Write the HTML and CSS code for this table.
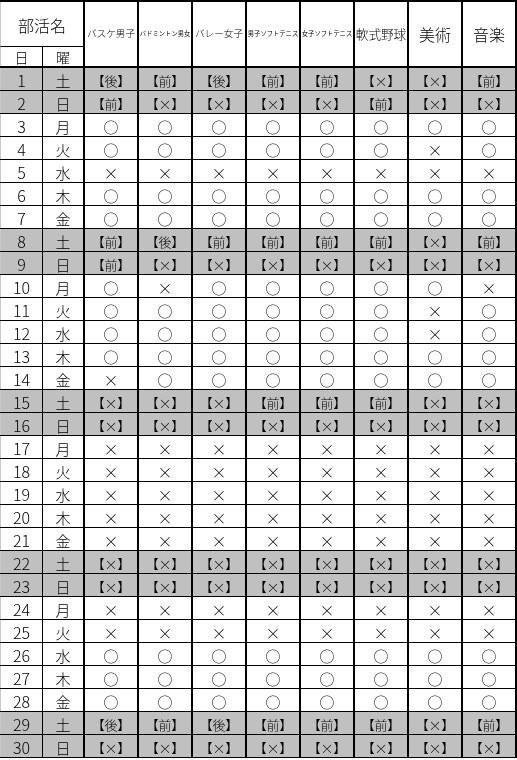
FILE: index.html
```html
<!DOCTYPE html>
<html lang="ja">
<head>
<meta charset="utf-8">
<title>部活動予定表</title>
<link rel="stylesheet" href="styles.css">
</head>
<body>
<div class="sheet">
  <div class="head">
    <div class="hc club">部活名</div>
    <div class="hc sport s10">バスケ男子</div>
    <div class="hc sport s6">バドミントン男女</div>
    <div class="hc sport s10">バレー女子</div>
    <div class="hc sport s6">男子ソフトテニス</div>
    <div class="hc sport s6">女子ソフトテニス</div>
    <div class="hc sport s12">軟式野球</div>
    <div class="hc sport s16">美術</div>
    <div class="hc sport s16">音楽</div>
    <div class="hc day">日</div>
    <div class="hc wd">曜</div>
  </div>

  <div class="row we"><div class="c d">1</div><div class="c w">土</div><div class="c b">【後】</div><div class="c b">【前】</div><div class="c b">【後】</div><div class="c b">【前】</div><div class="c b">【前】</div><div class="c b">【×】</div><div class="c b">【×】</div><div class="c b">【前】</div></div>
  <div class="row we"><div class="c d">2</div><div class="c w">日</div><div class="c b">【前】</div><div class="c b">【×】</div><div class="c b">【×】</div><div class="c b">【×】</div><div class="c b">【×】</div><div class="c b">【前】</div><div class="c b">【×】</div><div class="c b">【×】</div></div>
  <div class="row"><div class="c d">3</div><div class="c w">月</div><div class="c o">○</div><div class="c o">○</div><div class="c o">○</div><div class="c o">○</div><div class="c o">○</div><div class="c o">○</div><div class="c o">○</div><div class="c o">○</div></div>
  <div class="row"><div class="c d">4</div><div class="c w">火</div><div class="c o">○</div><div class="c o">○</div><div class="c o">○</div><div class="c o">○</div><div class="c o">○</div><div class="c o">○</div><div class="c x">×</div><div class="c o">○</div></div>
  <div class="row"><div class="c d">5</div><div class="c w">水</div><div class="c x">×</div><div class="c x">×</div><div class="c x">×</div><div class="c x">×</div><div class="c x">×</div><div class="c x">×</div><div class="c x">×</div><div class="c x">×</div></div>
  <div class="row"><div class="c d">6</div><div class="c w">木</div><div class="c o">○</div><div class="c o">○</div><div class="c o">○</div><div class="c o">○</div><div class="c o">○</div><div class="c o">○</div><div class="c o">○</div><div class="c o">○</div></div>
  <div class="row"><div class="c d">7</div><div class="c w">金</div><div class="c o">○</div><div class="c o">○</div><div class="c o">○</div><div class="c o">○</div><div class="c o">○</div><div class="c o">○</div><div class="c o">○</div><div class="c o">○</div></div>
  <div class="row we"><div class="c d">8</div><div class="c w">土</div><div class="c b">【前】</div><div class="c b">【後】</div><div class="c b">【前】</div><div class="c b">【前】</div><div class="c b">【前】</div><div class="c b">【前】</div><div class="c b">【×】</div><div class="c b">【前】</div></div>
  <div class="row we"><div class="c d">9</div><div class="c w">日</div><div class="c b">【前】</div><div class="c b">【×】</div><div class="c b">【×】</div><div class="c b">【×】</div><div class="c b">【×】</div><div class="c b">【×】</div><div class="c b">【×】</div><div class="c b">【×】</div></div>
  <div class="row"><div class="c d">10</div><div class="c w">月</div><div class="c o">○</div><div class="c x">×</div><div class="c o">○</div><div class="c o">○</div><div class="c o">○</div><div class="c o">○</div><div class="c o">○</div><div class="c x">×</div></div>
  <div class="row"><div class="c d">11</div><div class="c w">火</div><div class="c o">○</div><div class="c o">○</div><div class="c o">○</div><div class="c o">○</div><div class="c o">○</div><div class="c o">○</div><div class="c x">×</div><div class="c o">○</div></div>
  <div class="row"><div class="c d">12</div><div class="c w">水</div><div class="c o">○</div><div class="c o">○</div><div class="c o">○</div><div class="c o">○</div><div class="c o">○</div><div class="c o">○</div><div class="c x">×</div><div class="c o">○</div></div>
  <div class="row"><div class="c d">13</div><div class="c w">木</div><div class="c o">○</div><div class="c o">○</div><div class="c o">○</div><div class="c o">○</div><div class="c o">○</div><div class="c o">○</div><div class="c o">○</div><div class="c o">○</div></div>
  <div class="row"><div class="c d">14</div><div class="c w">金</div><div class="c x">×</div><div class="c o">○</div><div class="c o">○</div><div class="c o">○</div><div class="c o">○</div><div class="c o">○</div><div class="c o">○</div><div class="c o">○</div></div>
  <div class="row we"><div class="c d">15</div><div class="c w">土</div><div class="c b">【×】</div><div class="c b">【×】</div><div class="c b">【×】</div><div class="c b">【前】</div><div class="c b">【前】</div><div class="c b">【前】</div><div class="c b">【×】</div><div class="c b">【×】</div></div>
  <div class="row we"><div class="c d">16</div><div class="c w">日</div><div class="c b">【×】</div><div class="c b">【×】</div><div class="c b">【×】</div><div class="c b">【×】</div><div class="c b">【×】</div><div class="c b">【×】</div><div class="c b">【×】</div><div class="c b">【×】</div></div>
  <div class="row"><div class="c d">17</div><div class="c w">月</div><div class="c x">×</div><div class="c x">×</div><div class="c x">×</div><div class="c x">×</div><div class="c x">×</div><div class="c x">×</div><div class="c x">×</div><div class="c x">×</div></div>
  <div class="row"><div class="c d">18</div><div class="c w">火</div><div class="c x">×</div><div class="c x">×</div><div class="c x">×</div><div class="c x">×</div><div class="c x">×</div><div class="c x">×</div><div class="c x">×</div><div class="c x">×</div></div>
  <div class="row"><div class="c d">19</div><div class="c w">水</div><div class="c x">×</div><div class="c x">×</div><div class="c x">×</div><div class="c x">×</div><div class="c x">×</div><div class="c x">×</div><div class="c x">×</div><div class="c x">×</div></div>
  <div class="row"><div class="c d">20</div><div class="c w">木</div><div class="c x">×</div><div class="c x">×</div><div class="c x">×</div><div class="c x">×</div><div class="c x">×</div><div class="c x">×</div><div class="c x">×</div><div class="c x">×</div></div>
  <div class="row"><div class="c d">21</div><div class="c w">金</div><div class="c x">×</div><div class="c x">×</div><div class="c x">×</div><div class="c x">×</div><div class="c x">×</div><div class="c x">×</div><div class="c x">×</div><div class="c x">×</div></div>
  <div class="row we"><div class="c d">22</div><div class="c w">土</div><div class="c b">【×】</div><div class="c b">【×】</div><div class="c b">【×】</div><div class="c b">【×】</div><div class="c b">【×】</div><div class="c b">【×】</div><div class="c b">【×】</div><div class="c b">【×】</div></div>
  <div class="row we"><div class="c d">23</div><div class="c w">日</div><div class="c b">【×】</div><div class="c b">【×】</div><div class="c b">【×】</div><div class="c b">【×】</div><div class="c b">【×】</div><div class="c b">【×】</div><div class="c b">【×】</div><div class="c b">【×】</div></div>
  <div class="row"><div class="c d">24</div><div class="c w">月</div><div class="c x">×</div><div class="c x">×</div><div class="c x">×</div><div class="c x">×</div><div class="c x">×</div><div class="c x">×</div><div class="c x">×</div><div class="c x">×</div></div>
  <div class="row"><div class="c d">25</div><div class="c w">火</div><div class="c x">×</div><div class="c x">×</div><div class="c x">×</div><div class="c x">×</div><div class="c x">×</div><div class="c x">×</div><div class="c x">×</div><div class="c x">×</div></div>
  <div class="row"><div class="c d">26</div><div class="c w">水</div><div class="c o">○</div><div class="c o">○</div><div class="c o">○</div><div class="c o">○</div><div class="c o">○</div><div class="c o">○</div><div class="c o">○</div><div class="c o">○</div></div>
  <div class="row"><div class="c d">27</div><div class="c w">木</div><div class="c o">○</div><div class="c o">○</div><div class="c o">○</div><div class="c o">○</div><div class="c o">○</div><div class="c o">○</div><div class="c o">○</div><div class="c o">○</div></div>
  <div class="row"><div class="c d">28</div><div class="c w">金</div><div class="c o">○</div><div class="c o">○</div><div class="c o">○</div><div class="c o">○</div><div class="c o">○</div><div class="c o">○</div><div class="c o">○</div><div class="c o">○</div></div>
  <div class="row we"><div class="c d">29</div><div class="c w">土</div><div class="c b">【後】</div><div class="c b">【前】</div><div class="c b">【後】</div><div class="c b">【前】</div><div class="c b">【前】</div><div class="c b">【前】</div><div class="c b">【×】</div><div class="c b">【前】</div></div>
  <div class="row we"><div class="c d">30</div><div class="c w">日</div><div class="c b">【×】</div><div class="c b">【×】</div><div class="c b">【×】</div><div class="c b">【×】</div><div class="c b">【×】</div><div class="c b">【×】</div><div class="c b">【×】</div><div class="c b">【×】</div></div>
</div>
</body>
</html>
```

FILE: styles.css
```css
html, body {
  margin: 0;
  padding: 0;
  background: #ffffff;
}

body {
  font-family: "Noto Sans CJK JP", "Noto Sans", sans-serif;
  font-weight: 300;
  color: #000000;
  overflow: hidden;
}

.sheet {
  width: 517px;
  filter: grayscale(1);
}

.head {
  display: grid;
  grid-template-columns: 43px 42px repeat(8, 54px);
  grid-template-rows: 45px 19px;
  border-top: 2px solid #000;
  border-bottom: 2px solid #000;
  background: #fff;
}

.hc {
  display: flex;
  align-items: center;
  justify-content: center;
  white-space: nowrap;
  overflow: hidden;
  line-height: 1;
  box-sizing: border-box;
}

.club {
  grid-column: 1 / 3;
  grid-row: 1;
  border-left: 1px solid #c8c8c8;
  border-right: 2px solid #000;
  border-bottom: 1px solid #000;
  font-size: 16px;
  padding-top: 1px;
}

.day {
  grid-column: 1;
  grid-row: 2;
  border-left: 1px solid #c8c8c8;
  border-right: 1px solid #000;
  font-size: 14px;
}

.wd {
  grid-column: 2;
  grid-row: 2;
  border-right: 2px solid #000;
  font-size: 14px;
}

.sport {
  grid-row: 1 / 3;
  border-right: 2px solid #000;
}

.s6 { font-size: 6.3px; font-weight: 400; }
.s10 { font-size: 9.6px; }
.s12 { font-size: 12.6px; }
.s16 { font-size: 16px; }

.row {
  display: grid;
  grid-template-columns: 43px 42px repeat(8, 54px);
  height: 23px;
  box-sizing: border-box;
  border-bottom: 1px solid #000;
  background: #fff;
}

.row.we {
  background: #c0c0c0;
}

.c {
  display: flex;
  align-items: center;
  justify-content: center;
  border-right: 2px solid #000;
  line-height: 1;
  white-space: nowrap;
  padding-top: 2px;
  box-sizing: border-box;
}

.c.d {
  border-left: 1px solid #c8c8c8;
  border-right: 1px solid #000;
  font-size: 16px;
}

.c.w {
  font-size: 15px;
}

.c.o {
  font-size: 15px;
}

.c.x {
  font-size: 15px;
}

.c.b {
  font-size: 13px;
  font-feature-settings: "palt";
}
```
